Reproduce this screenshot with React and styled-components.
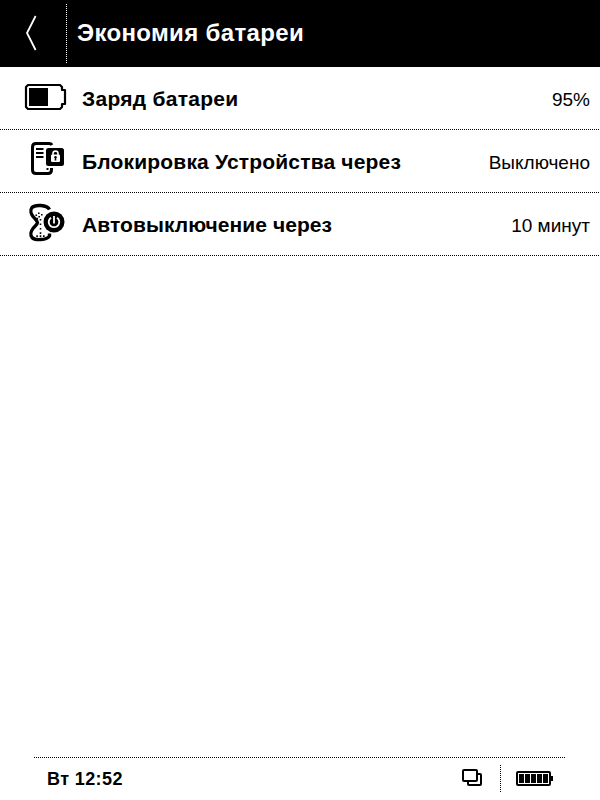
import styled, { createGlobalStyle } from 'styled-components';

const GlobalStyle = createGlobalStyle`
	* {
		box-sizing: border-box;
	}
	body {
		margin: 0;
		background: #fff;
		color: #000;
		font-family: "Liberation Sans", Arial, sans-serif;
	}
	svg {
		display: block;
	}
`;

const Screen = styled.div`
	display: flex;
	flex-direction: column;
	width: 600px;
	height: 800px;
	overflow: hidden;
`;

const Header = styled.header`
	display: flex;
	height: 67px;
	background: #000;
	color: #fff;
`;

const BackButton = styled.div`
	width: 66px;
	padding: 15px 0 0 25px;
`;

// one pixel on, one pixel off
const DottedColumn = styled.div`
	width: 1px;
	height: ${({ $height }) => $height}px;
	margin-top: ${({ $top }) => $top}px;
	background: repeating-linear-gradient(to bottom, ${({ $color }) => $color} 0 1px, transparent 1px 2px);
`;

const DottedLine = styled.div`
	height: 1px;
	margin: 0 ${({ $right }) => $right || 0}px 0 ${({ $left }) => $left || 0}px;
	background: repeating-linear-gradient(to right, #000 0 1px, transparent 1px 2px);
`;

const Title = styled.h1`
	margin: 0 0 0 10px;
	font-size: 24px;
	line-height: 66px;
	letter-spacing: 0.35px;
`;

const List = styled.main`
	flex: 1;
`;

const Row = styled.div`
	display: flex;
	height: 62px;
	padding: 0 10px 0 24px;
	line-height: 64px;
`;

const RowIcon = styled.div`
	width: 58px;
	padding-top: 10px;
`;

const Label = styled.div`
	flex: 1;
	font-size: 21px;
	font-weight: bold;
	letter-spacing: ${({ $spacing }) => $spacing}px;
	white-space: nowrap;
`;

const Value = styled.div`
	font-size: 19px;
	line-height: 65px;
	white-space: nowrap;
`;

const Footer = styled.footer`
	display: flex;
	height: 42px;
	padding: 0 47px;
`;

const Clock = styled.div`
	flex: 1;
	font-size: 18px;
	font-weight: bold;
	line-height: 42px;
	letter-spacing: 0.4px;
`;

const StatusIcon = styled.div`
	padding-top: 10px;
	margin-left: ${({ $before }) => $before || 0}px;
	margin-right: ${({ $after }) => $after || 0}px;
`;

const BackIcon = () => (
	<svg width="14" height="36" viewBox="0 0 14 36" fill="none" stroke="#fff" strokeWidth="1.8">
		<path d="M10.6 1L2 18L10.6 35" />
	</svg>
);

const ChargeIcon = () => (
	<svg width="44" height="44" viewBox="24 77 44 44">
		<path d="M28 85H60L62 87V90H65V104H62V107L60 109H28L26 107V87Z" fill="none" stroke="#000" strokeWidth="2.2" strokeLinejoin="round" />
		<rect x="29" y="88" width="19" height="18" />
	</svg>
);

const LockIcon = () => (
	<svg width="44" height="44" viewBox="24 140 44 44">
		<path d="M52 145C51.5 144 50.5 143.5 49 143.5H36C33.7 143.5 32.5 144.7 32.5 147V170C32.5 172.3 33.7 173.5 36 173.5H48C50.3 173.5 51.5 172.3 51.5 170V168" fill="none" stroke="#000" strokeWidth="3" />
		<path d="M36 149H43.5M36 153H43.5M36 157H43.5" stroke="#000" strokeWidth="2" />
		<rect x="46" y="148" width="18" height="18" rx="2.5" />
		<path d="M53 155V153.4C53 150.4 58 150.4 58 153.4V155" fill="none" stroke="#fff" strokeWidth="1.6" />
		<rect x="51" y="154.5" width="9" height="7.5" rx="1.3" fill="#fff" />
		<circle cx="55.5" cy="157.2" r="1.2" />
		<path d="M55 157H56L56.4 160.5H54.6Z" />
		<rect x="46.5" y="168" width="2" height="2" />
	</svg>
);

const HourglassIcon = () => (
	<svg width="44" height="44" viewBox="24 203 44 44">
		<path d="M49.5 209.5C47 204.8 35 204.3 32 207.5C30 210 31 214 33 216.5C35.5 219.5 37.5 221 37.5 222.5C37.5 224 35.5 225.5 33 228.5C31 231 30 235 32 237.5C35 240.7 47 240.2 49.5 236V233.5" fill="none" stroke="#000" strokeWidth="3.4" />
		<path d="M38 212.5h1.6v1.6h-1.6zM35.5 214.5h1.6v1.6h-1.6zM38.4 216h1.6v1.6h-1.6zM36.5 217.8h1.6v1.6h-1.6zM41 214h1.6v1.6h-1.6zM39.7 219h1.6v1.6h-1.6zM39.7 223.5h1.6v1.6h-1.6zM39.7 228h1.6v1.6h-1.6zM39.7 232.3h1.6v1.6h-1.6zM36.3 235.3h1.6v1.6h-1.6zM39.7 235.3h1.6v1.6h-1.6zM43 235.3h1.6v1.6h-1.6z" />
		<circle cx="54" cy="222" r="11.5" fill="#fff" />
		<circle cx="54" cy="222" r="10.5" />
		<path d="M51 217.8C46.8 221.2 49 227.2 54 227.2C59 227.2 61.2 221.2 57 217.8M54 216V223.5" fill="none" stroke="#fff" strokeWidth="1.8" />
	</svg>
);

const WindowsIcon = () => (
	<svg width="22" height="20" viewBox="461 768 22 20" fill="none" stroke="#000" strokeWidth="2">
		<rect x="463" y="770" width="14" height="11" rx="1" />
		<path d="M468 781V784Q468 785 469 785H480Q481 785 481 784V775Q481 774 480 774H477" />
	</svg>
);

const BatteryIcon = () => (
	<svg width="38" height="20" viewBox="515 768 38 20">
		<rect x="517" y="772" width="33" height="13" rx="1" fill="none" stroke="#000" strokeWidth="2" />
		<path d="M551 776h2v5h-2z" />
		{[519, 525, 531, 537, 543].map(x => (
			<rect key={x} x={x} y="774" width="5" height="9" />
		))}
	</svg>
);

const settings = [
	{ id: 'charge', icon: <ChargeIcon />, label: 'Заряд батареи', spacing: 0.28, value: '95%' },
	{ id: 'lock', icon: <LockIcon />, label: 'Блокировка Устройства через', spacing: 0.18, value: 'Выключено' },
	{ id: 'off', icon: <HourglassIcon />, label: 'Автовыключение через', spacing: 0.08, value: '10 минут' },
];

const App = () => {
	return (
		<Screen>
			<GlobalStyle />
			<Header>
				<BackButton><BackIcon /></BackButton>
				<DottedColumn $height={59} $top={4} $color="#fff" />
				<Title>Экономия батареи</Title>
			</Header>
			<List>
				{settings.map(item => (
					<div key={item.id}>
						<Row>
							<RowIcon>{item.icon}</RowIcon>
							<Label $spacing={item.spacing}>{item.label}</Label>
							<Value>{item.value}</Value>
						</Row>
						<DottedLine />
					</div>
				))}
			</List>
			<DottedLine $left={34} $right={35} />
			<Footer>
				<Clock>Вт 12:52</Clock>
				<StatusIcon $after={17}><WindowsIcon /></StatusIcon>
				<DottedColumn $height={27} $top={7} $color="#000" />
				<StatusIcon $before={14}><BatteryIcon /></StatusIcon>
			</Footer>
		</Screen>
	);
};

export default App;
